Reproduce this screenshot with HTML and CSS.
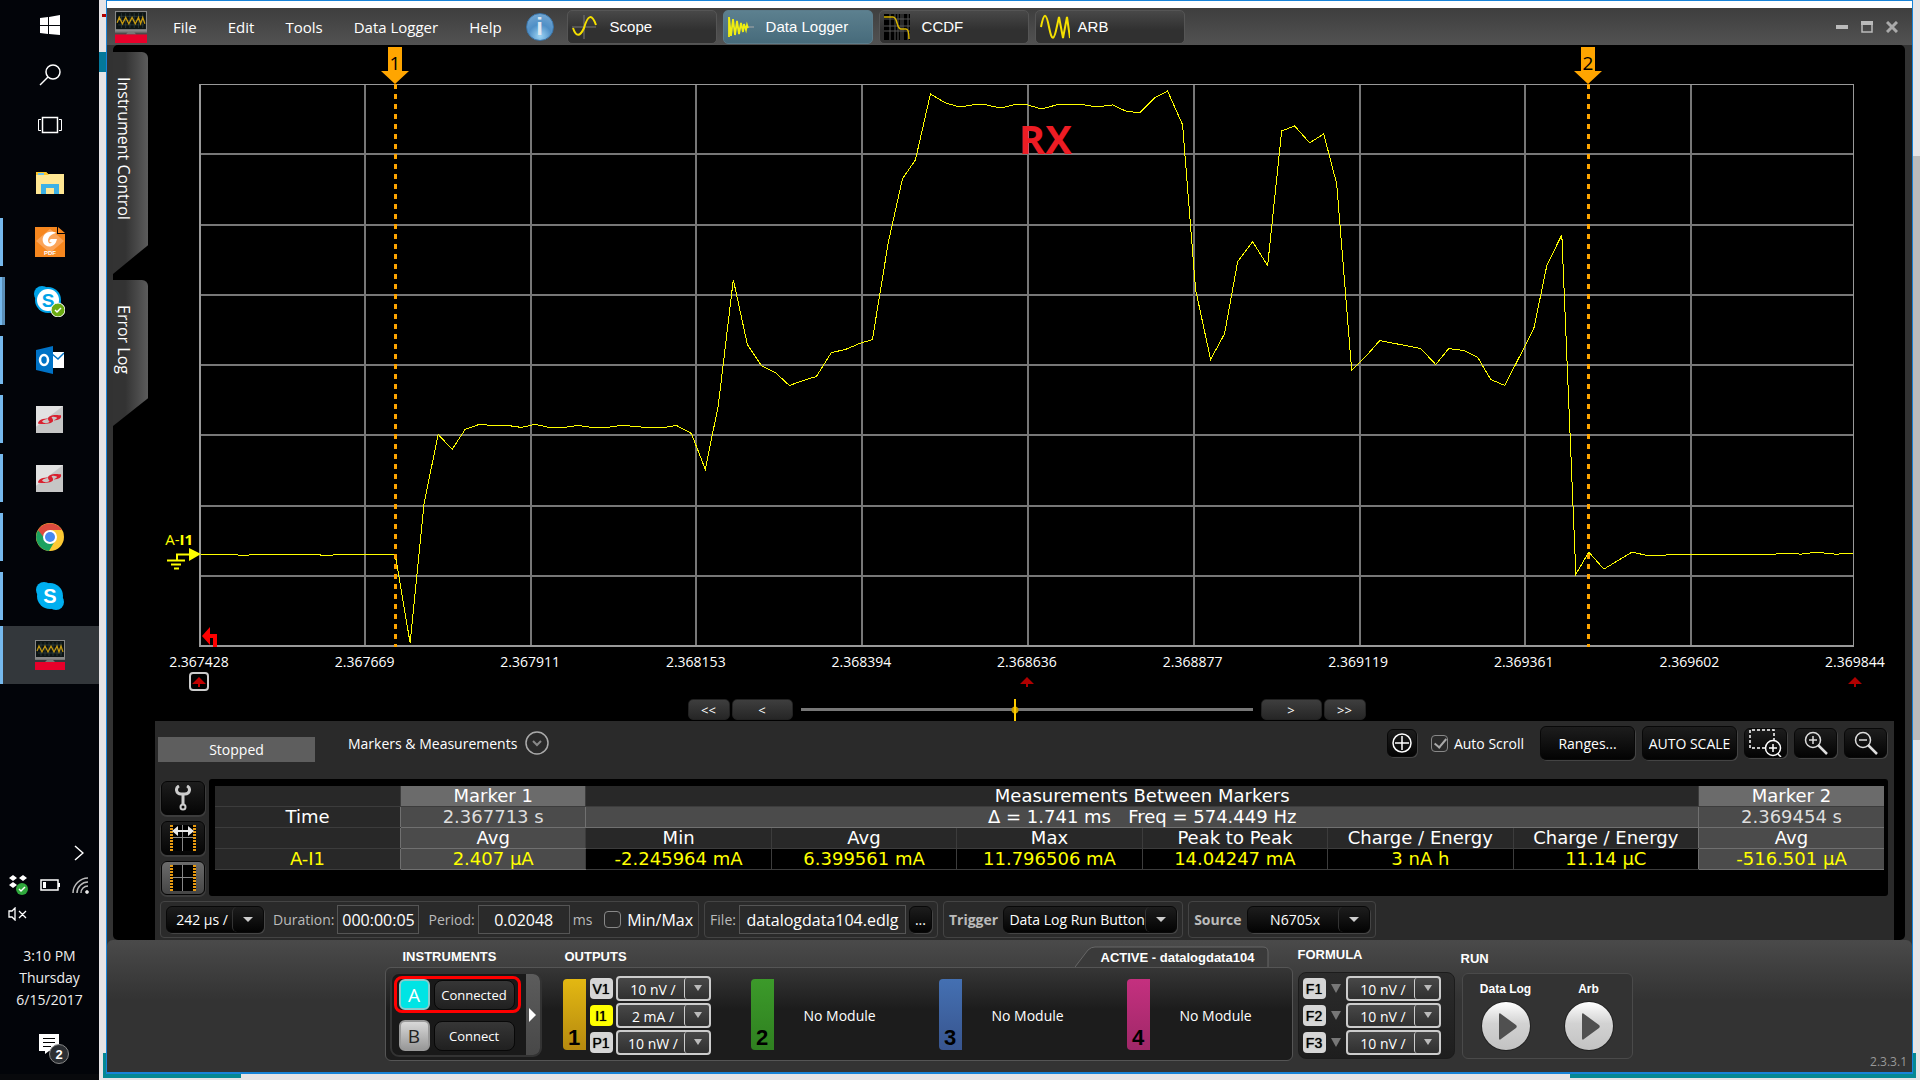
FILE: index.html
```html
<!-- Power analyzer data logger screen -->
<!DOCTYPE html>
<html lang="en">
  <head>
    <meta charset="utf-8">
    <title>Data Logger</title>
    <link rel="stylesheet" href="styles.css">
  </head>

  <body>
    <!-- Shared icons -->
    <svg class="symbols">
      <symbol id="analyzer" viewBox="0 0 30 30">
        <rect width="30" height="20" fill="#888"/>
        <rect x="1" y="1" width="28" height="16" fill="#0d1414"/>
        <path d="M3 5h24M3 9h24M3 13h24M6 2v14M10 2v14M14 2v14M18 2v14M22 2v14M26 2v14" stroke="#3d5050" stroke-width="0.500" fill="none"/>
        <path d="M2 11l2-5 3 6 3-6 3 6 3-6 3 6 3-6 2 6 2-6 2 6" stroke="#c79a10" stroke-width="1.200" fill="none"/>
        <path d="M0 19h30v1H0zM12 20h6l2 2H10z" fill="#777"/>
        <rect y="22" width="30" height="8" fill="#e8002a"/>
      </symbol>
      <symbol id="silabs" viewBox="0 0 26 26">
        <rect width="26" height="26" fill="#c6c6c6"/>
        <path d="M0 0h26L0 20z" fill="#e2e2e2"/>
        <path d="M2 17c0-4 5-5 10-5-3 1-6 2-6 3 1 2 6 2 7 0-2-2-2-4 0-5 4-2 9-1 11-1 1 3-2 5-7 5 1-1 4-2 3-3-2-1-5-1-5 0 2 2 2 4 0 5-4 2-9 1-13 1z" fill="#d9202f"/>
      </symbol>
      <symbol id="markers" viewBox="0 0 26 26">
        <path d="M0 0h26v26H0z" fill="#000"/>
        <path d="M12.500 0v26M2 12.500h22" stroke="#888"/>
        <path d="M1.500 0v26M24.500 0v26" stroke="#e89a10" stroke-width="3" stroke-dasharray="2 1"/>
      </symbol>
      <symbol id="play" viewBox="0 0 50 50">
        <circle cx="25" cy="25" r="25" fill="#222"/>
        <circle cx="25" cy="25" r="24" fill="url(#knob)"/>
        <path d="M18 14c0-2 1-2 2-1l15 11c1 1 1 2 0 3L20 38c-1 1-2 1-2-1z" fill="#505050"/>
      </symbol>
      <linearGradient id="knob" x1="0" y1="0" x2="0" y2="1">
        <stop offset="0" stop-color="#fff"/>
        <stop offset="0.450" stop-color="#d2d2d2"/>
        <stop offset="1" stop-color="#c2c2c2"/>
      </linearGradient>
    </svg>

    <!-- Windows taskbar -->
    <nav class="taskbar">
      <button class="task small" aria-label="Start">
        <svg width="20" height="20" viewBox="0 0 20 20" fill="#fff"><path d="M0 3l8-1v8H0zM9 2l11-2v10H9zM0 11h8v8l-8-1zM9 11h11v9L9 19z"/></svg>
      </button>
      <button class="task small" aria-label="Search">
        <svg width="22" height="22" viewBox="0 0 22 22" fill="none" stroke="#fff" stroke-width="1.500"><circle cx="14" cy="8" r="7"/><path d="M9 13l-8 8"/></svg>
      </button>
      <button class="task small" aria-label="Task view">
        <svg width="24" height="18" viewBox="0 0 24 18" fill="none" stroke="#fff"><path d="M4.500 1.500h15v15h-15z" stroke-width="1.500"/><path d="M3 3.500H.5v11H3M21 3.500h2.500v11H21"/></svg>
      </button>
      <button class="task" aria-label="File Explorer">
        <svg width="28" height="24" viewBox="0 0 28 24"><path d="M0 1h10l2 2h16v20H0z" fill="#ffe793"/><path d="M0 1h10l3 3H0z" fill="#ffc726"/><path d="M2 2h6v2H2z" fill="#6ec4ee"/><path d="M5 13h18v10h-5v-6h-8v6H5z" fill="#3cb1e6"/></svg>
      </button>
      <button class="task open" aria-label="PDF reader">
        <svg width="30" height="30" viewBox="0 0 30 30"><path d="M0 0h22v7h8v23H0z" fill="#f6871f"/><path d="M23 0l7 6h-7z" fill="#f6871f"/><path d="M15 2l14 12-14 12L1 14z" fill="#fba55a"/><path d="M22 6C13 2 6 8 8 15c2 6 12 7 14-3h-6c-3 2-1 4 1 3-3 4-6-2-2-6 2-2 5-3 7-3z" fill="#fff"/><text x="15" y="28" font-size="6" class="pdf-text">PDF</text></svg>
      </button>
      <button class="task open grouped" aria-label="Skype for Business">
        <svg width="31" height="31" viewBox="0 0 31 31"><circle cx="8" cy="8" r="8" fill="#00a3e8"/><circle cx="19" cy="19" r="8" fill="#00a3e8"/><circle cx="14" cy="14" r="13" fill="#00a3e8"/><circle cx="14" cy="14" r="11" fill="#fff"/><text x="14" y="21" font-size="19" class="skype-blue">S</text><circle cx="24" cy="24" r="7" fill="#6bab12" stroke="#fff"/><path d="M21 24l2 2 4-4" fill="none" stroke="#fff" stroke-width="1.500"/></svg>
      </button>
      <button class="task open" aria-label="Outlook">
        <svg width="28" height="28" viewBox="0 0 28 28"><path d="M16 6h12v16H16z" fill="#fff"/><path d="M16 8l6 5 6-6" fill="none" stroke="#0072c6" stroke-width="1.500"/><path d="M0 4l17-4v28L0 24z" fill="#0072c6"/><ellipse cx="8" cy="14" rx="4" ry="5" fill="none" stroke="#fff" stroke-width="2.500"/></svg>
      </button>
      <button class="task open" aria-label="Simplicity Studio"><svg width="27" height="27"><use href="#silabs"/></svg></button>
      <button class="task open" aria-label="Simplicity Commander"><svg width="27" height="27"><use href="#silabs"/></svg></button>
      <button class="task open" aria-label="Chrome">
        <svg width="28" height="28" viewBox="0 0 28 28"><circle cx="14" cy="14" r="14" fill="#fcc934"/><path d="M14 14L2 7a14 14 0 0 0 11 21l7-12z" fill="#1aa15f"/><path d="M2 7a14 14 0 0 1 24 0H14l-5 9z" fill="#dd4b3e"/><circle cx="14" cy="14" r="7" fill="#fff"/><circle cx="14" cy="14" r="5" fill="#4688f1"/></svg>
      </button>
      <button class="task open" aria-label="Skype">
        <svg width="28" height="28" viewBox="0 0 28 28"><circle cx="8" cy="8" r="8" fill="#00aff0"/><circle cx="20" cy="20" r="8" fill="#00aff0"/><circle cx="14" cy="14" r="13" fill="#00aff0"/><text x="14" y="21" font-size="20" class="skype-white">S</text></svg>
      </button>
      <button class="task open active" aria-label="Power analyzer"><svg width="30" height="30"><use href="#analyzer"/></svg></button>

      <!-- System tray and clock -->
      <div class="tray">
        <svg class="tray-more" width="10" height="16" viewBox="0 0 10 16" fill="none" stroke="#fff" stroke-width="1.500"><path d="M1 1l8 7-8 7"/></svg>
        <div class="tray-icons">
          <svg width="20" height="20" viewBox="0 0 20 20"><path d="M5 0l4 3-4 3-4-3zM15 0l4 3-4 3-4-3zM5 7l4 3-4 3-4-3zM9 14l4 3v2z" fill="#fff"/><circle cx="14" cy="14" r="6" fill="#2fa83c"/><path d="M11 14l2 2 4-4" fill="none" stroke="#fff" stroke-width="1.500"/></svg>
          <svg width="20" height="12" viewBox="0 0 20 12"><path d="M1 1h17v10H1z" fill="none" stroke="#fff" stroke-width="1.500"/><path d="M3 3h3v6H3zM18 4h2v4h-2z" fill="#fff"/></svg>
          <svg width="17" height="17" viewBox="0 0 17 17" fill="none" stroke="#bbb"><path d="M1 16C1 8 8 1 16 1M5 16C5 10 10 5 16 5M9 16c0-4 3-7 7-7" stroke-width="1.500"/><circle cx="15" cy="15" r="1.500" fill="#fff"/></svg>
        </div>
        <svg width="20" height="14" viewBox="0 0 20 14" fill="none" stroke="#fff"><path d="M1 4h3l3-3v12l-3-3H1zM11 4l7 7M18 4l-7 7" stroke-width="1.300"/></svg>
      </div>
      <p class="clock">3:10 PM<br>Thursday<br>6/15/2017</p>
      <button class="notices" aria-label="Notifications">
        <svg width="30" height="30" viewBox="0 0 30 30"><path d="M0 0h20v17H10l-4 3v-3H0z" fill="#fff"/><path d="M4 4.500h12M4 8.500h12M4 12.500h8" stroke="#000"/><circle cx="20" cy="20" r="9.500" fill="#2c2f33" stroke="#888"/><text x="20" y="25" font-size="13" class="badge">2</text></svg>
      </button>
    </nav>

    <!-- Application window -->
    <div class="app">
      <header class="titlebar">
        <svg class="logo" width="32" height="32"><use href="#analyzer"/></svg>
        <nav class="menu">
          <button>File</button>
          <button>Edit</button>
          <button>Tools</button>
          <button>Data Logger</button>
          <button>Help</button>
        </nav>
        <button class="info" aria-label="About">i</button>
        <div class="modes">
          <button class="mode">
            <svg width="26" height="24" viewBox="0 0 26 24" fill="none"><path d="M0 12h24M12 0v24" stroke="#777"/><path d="M1 13c3 9 7 9 11 0 4-14 8-14 12-3" stroke="#f5e000" stroke-width="2"/></svg>
            Scope
          </button>
          <button class="mode selected">
            <svg width="26" height="22" viewBox="0 0 26 22" fill="none"><path d="M20 11h6" stroke="#aaa"/><path d="M1 21V1l2 19L5 3l2 16L9 5l2 13 2-11 2 9 1-8 2 6 1-5 1 3" stroke="#f0ee10" stroke-width="1.800"/></svg>
            Data Logger
          </button>
          <button class="mode">
            <svg width="26" height="26" viewBox="0 0 26 26" fill="none"><path d="M0 0h26v26H0z" fill="#000"/><path d="M0 5h26M0 12h26M0 17h26M6 0v26M11 0v26M14 0v26M17 0v26M19 0v26M24 0v26" stroke="#555"/><path d="M0 3h9c5 0 3 12 8 12h5q3 0 3 10" stroke="#d8b400" stroke-width="1.500"/></svg>
            CCDF
          </button>
          <button class="mode">
            <svg width="30" height="26" viewBox="0 0 30 26" fill="none"><path d="M1 13C4-2 6-2 9 13s5 14 8-1l2-9 4 21 4-21 3 21" stroke="#f5e000" stroke-width="2"/></svg>
            ARB
          </button>
        </div>
        <div class="window-buttons">
          <button aria-label="Minimize"><svg width="12" height="12"><path d="M0 4h12v4H0z" fill="#bbb"/></svg></button>
          <button aria-label="Maximize"><svg width="12" height="12"><path d="M1 1h10v10H1z" fill="none" stroke="#bbb" stroke-width="1.500"/><path d="M0 0h12v4H0z" fill="#bbb"/></svg></button>
          <button aria-label="Close"><svg width="12" height="12"><path d="M1 1l10 10M11 1L1 11" stroke="#aaa" stroke-width="3"/></svg></button>
        </div>
      </header>

      <main class="screen">
        <div class="plot-row">
          <div class="side-tabs">
            <button class="side-tab tall">Instrument Control</button>
            <button class="side-tab">Error Log</button>
          </div>

          <section class="plot-area">
            <div class="plot">
              <!-- Grid and trace -->
              <svg class="trace" viewBox="201 85 1651 561" preserveAspectRatio="none">
                <path class="grid" d="M200 154h1653M200 225h1653M200 295h1653M200 366h1653M200 436h1653M200 507h1653M200 577h1653M365 84v564M531 84v564M696 84v564M862 84v564M1027 84v564M1193 84v564M1359 84v564M1524 84v564M1690 84v564"/>
                <polyline class="wave" points="200,555 228,555 240,556 248,556 255,555 312,555 322,556 332,556 340,555 395,555 410,644 424,504 438,435 452,450 465,430 479,425 492,426 507,426 521,428 535,425 549,428 564,428 578,426 591,428 607,428 621,426 635,427 645,428 664,428 676,426 691,434 705,470 718,406 733,280 747,345 761,366 775,373 789,386 803,381 816,377 831,353 845,350 859,344 872,340 888,242 902,179 915,160 930,94 945,103 959,107 972,105 986,105 1000,108 1013,105 1027,105 1041,109 1056,105 1084,105 1096,107 1112,105 1125,111 1139,113 1154,98 1167,91 1182,125 1195,290 1210,360 1224,334 1237,262 1252,242 1267,266 1281,131 1294,126 1309,143 1323,134 1336,184 1351,371 1365,357 1379,341 1420,349 1435,365 1448,349 1463,351 1477,358 1490,380 1504,386 1533,329 1546,266 1561,235 1575,575 1588,553 1603,570 1631,553 1645,556 1664,556 1674,555 1773,555 1785,554 1800,555 1815,553 1835,555 1853,554"/>
              </svg>
              <div class="marker marker-1">
                <svg width="28" height="37" viewBox="0 0 28 37"><path d="M7 0h14v24h7L14 37 0 24h7z" fill="#ffa500"/></svg>
                <span>1</span>
              </div>
              <div class="marker marker-2">
                <svg width="28" height="37" viewBox="0 0 28 37"><path d="M7 0h14v24h7L14 37 0 24h7z" fill="#ffa500"/></svg>
                <span>2</span>
              </div>
              <div class="channel">
                <span>A-<b>I1</b></span>
                <svg width="34" height="22" viewBox="0 0 34 22"><path d="M22 0l12 6-12 7z" fill="#ff0"/><path d="M24 6.500H10V12M0 12.500h18M4 16.500h10M7 20.500h5" fill="none" stroke="#ff0" stroke-width="2"/></svg>
              </div>
              <svg class="trigger" width="15" height="20" viewBox="0 0 15 20"><path d="M8 0v7h7v13h-4v-9H8v7L0 9z" fill="#f00"/></svg>
              <span class="note">RX</span>
            </div>

            <div class="axis">
              <span>2.367428</span>
              <span>2.367669</span>
              <span>2.367911</span>
              <span>2.368153</span>
              <span>2.368394</span>
              <span>2.368636</span>
              <span>2.368877</span>
              <span>2.369119</span>
              <span>2.369361</span>
              <span>2.369602</span>
              <span>2.369844</span>
            </div>
            <div class="anchors">
              <button class="anchor boxed" aria-label="Anchor left"><svg width="14" height="10"><path d="M7 0l7 7H8v3H6V7H0z" fill="#c00000"/></svg></button>
              <button class="anchor" aria-label="Anchor center"><svg width="14" height="10"><path d="M7 0l7 7H8v3H6V7H0z" fill="#b00000"/></svg></button>
              <button class="anchor" aria-label="Anchor right"><svg width="14" height="10"><path d="M7 0l7 7H8v3H6V7H0z" fill="#b00000"/></svg></button>
            </div>

            <div class="pager">
              <button class="page-btn">&lt;&lt;</button>
              <button class="page-btn wide">&lt;</button>
              <input type="range" class="scroll" min="0" max="1000" value="475" aria-label="Scroll position">
              <button class="page-btn wide">&gt;</button>
              <button class="page-btn">&gt;&gt;</button>
            </div>
          </section>
        </div>

        <!-- Measurement panel -->
        <section class="panel">
          <div class="panel-head">
            <div class="status">Stopped</div>
            <button class="view-menu">Markers &amp; Measurements
              <svg width="24" height="24" viewBox="0 0 24 24" fill="none"><circle cx="12" cy="12" r="11" stroke="#aaa" stroke-width="1.500"/><path d="M8 10l4 4 4-4" stroke="#888" stroke-width="2"/></svg>
            </button>
            <div class="tools">
              <button class="dark-btn center-btn" aria-label="Center"><svg width="20" height="20" viewBox="0 0 20 20" fill="none" stroke="#fff" stroke-width="1.500"><circle cx="10" cy="10" r="9"/><path d="M10 3v14M3 10h14"/></svg></button>
              <label class="check auto-scroll"><input type="checkbox" checked>Auto Scroll</label>
              <button class="dark-btn text-btn">Ranges...</button>
              <button class="dark-btn text-btn">AUTO SCALE</button>
              <button class="dark-btn zoom-btn" aria-label="Zoom to area"><svg width="34" height="28" viewBox="0 0 34 28" fill="none" stroke="#fff"><path d="M16 19H1V1h24v10" stroke-width="1.500" stroke-dasharray="3 2"/><circle cx="24" cy="19" r="7.500" stroke-width="1.500"/><path d="M24 15v8M20 19h8M29 25l3 3" stroke-width="1.500"/></svg></button>
              <button class="dark-btn zoom-btn" aria-label="Zoom in"><svg width="24" height="24" viewBox="0 0 24 24" fill="none" stroke="#ddd"><circle cx="9" cy="9" r="7.500" stroke-width="1.500"/><path d="M9 5v8M5 9h8" stroke-width="1.500"/><path d="M14 14l9 9" stroke-width="2.500"/></svg></button>
              <button class="dark-btn zoom-btn" aria-label="Zoom out"><svg width="24" height="24" viewBox="0 0 24 24" fill="none" stroke="#ddd"><circle cx="9" cy="9" r="7.500" stroke-width="1.500"/><path d="M5 9h8" stroke-width="1.500"/><path d="M14 14l9 9" stroke-width="2.500"/></svg></button>
            </div>
          </div>

          <div class="panel-body">
            <div class="panel-views">
              <button class="view-btn" aria-label="Properties"><svg width="16" height="26" viewBox="0 0 16 26" fill="none" stroke="#ccc"><path d="M4 1C0 3 1 9 6 9h4c5 0 6-6 2-8" stroke-width="3"/><path d="M8 9v10" stroke-width="3"/><circle cx="8" cy="22" r="2.500" stroke-width="2"/></svg></button>
              <button class="view-btn" aria-label="Move markers"><svg width="26" height="26" viewBox="0 0 26 26"><use href="#markers"/><path d="M2 6l6-5v4h10V1l6 5-6 5V7H8v4z" fill="#e8e8e8"/></svg></button>
              <button class="view-btn selected" aria-label="Show markers"><svg width="26" height="26"><use href="#markers"/></svg></button>
            </div>
            <div class="table-box">
              <table class="measures">
                <tr>
                  <th></th>
                  <th class="head-cell">Marker 1</th>
                  <th colspan="6">Measurements Between Markers</th>
                  <th class="head-cell">Marker 2</th>
                </tr>
                <tr>
                  <th>Time</th>
                  <td class="marker-cell">2.367713 s</td>
                  <td colspan="6" class="marker-cell delta">Δ = 1.741 ms &nbsp; Freq = 574.449 Hz</td>
                  <td class="marker-cell">2.369454 s</td>
                </tr>
                <tr>
                  <th></th>
                  <th class="marker-cell delta">Avg</th>
                  <th>Min</th>
                  <th>Avg</th>
                  <th>Max</th>
                  <th>Peak to Peak</th>
                  <th>Charge / Energy</th>
                  <th>Charge / Energy</th>
                  <th class="marker-cell delta">Avg</th>
                </tr>
                <tr class="values">
                  <th>A-I1</th>
                  <td class="marker-cell">2.407 µA</td>
                  <td>-2.245964 mA</td>
                  <td>6.399561 mA</td>
                  <td>11.796506 mA</td>
                  <td>14.04247 mA</td>
                  <td>3 nA h</td>
                  <td>11.14 µC</td>
                  <td class="marker-cell">-516.501 µA</td>
                </tr>
              </table>
            </div>
          </div>

          <!-- Logger settings -->
          <form class="settings">
            <div class="group">
              <span class="drop time-drop"><select aria-label="Time per division"><option>242 µs /</option></select></span>
              <label for="duration">Duration:</label>
              <input type="text" id="duration" class="field duration" value="000:00:05">
              <label for="period">Period:</label>
              <input type="text" id="period" class="field period" value="0.02048">
              <span class="unit">ms</span>
              <label class="check minmax"><input type="checkbox">Min/Max</label>
            </div>
            <div class="group">
              <label for="file">File:</label>
              <input type="text" id="file" class="field file" value="datalogdata104.edlg">
              <button type="button" class="dark-btn browse">...</button>
            </div>
            <div class="group">
              <label for="trigger" class="strong">Trigger</label>
              <span class="drop trigger-drop"><select id="trigger"><option>Data Log Run Button</option></select></span>
            </div>
            <div class="group">
              <label for="source" class="strong">Source</label>
              <span class="drop source-drop"><select id="source"><option>N6705x</option></select></span>
            </div>
          </form>
        </section>
      </main>

      <!-- Instrument, output and run controls -->
      <footer class="controls">
        <section class="outputs-section">
          <div class="section-heads">
            <h2 class="instruments-title">INSTRUMENTS</h2>
            <h2>OUTPUTS</h2>
            <div class="active-tab">
              <svg viewBox="0 0 194 21" width="194" height="21"><path d="M0 21L13 4q3-3 7-3h168q5 0 5 5v15" fill="#3a3a3a" stroke="#666"/></svg>
              <span>ACTIVE - datalogdata104</span>
            </div>
          </div>
          <div class="outputs-box">
            <div class="instruments">
              <div class="instrument-list">
                <div class="instrument connected"><button class="letter">A</button><button class="connect">Connected</button></div>
                <div class="instrument"><button class="letter">B</button><button class="connect">Connect</button></div>
              </div>
              <button class="expand" aria-label="Expand"><svg width="7" height="14"><path d="M0 0l7 7-7 7z" fill="#fff"/></svg></button>
            </div>
            <div class="output">
              <div class="output-bar yellow">1</div>
              <div class="ranges">
                <div class="range-row"><button class="tag">V1</button><span class="drop light"><select aria-label="V1 range"><option>10 nV /</option></select></span></div>
                <div class="range-row"><button class="tag on">I1</button><span class="drop light"><select aria-label="I1 range"><option>2 mA /</option></select></span></div>
                <div class="range-row"><button class="tag">P1</button><span class="drop light"><select aria-label="P1 range"><option>10 nW /</option></select></span></div>
              </div>
            </div>
            <div class="output"><div class="output-bar green">2</div><p class="module">No Module</p></div>
            <div class="output"><div class="output-bar blue">3</div><p class="module">No Module</p></div>
            <div class="output"><div class="output-bar pink">4</div><p class="module">No Module</p></div>
          </div>
        </section>

        <section>
          <h2 class="formula-title">FORMULA</h2>
          <div class="formula-box">
            <div class="range-row"><button class="tag">F1</button><i class="down"></i><span class="drop light"><select aria-label="F1 range"><option>10 nV /</option></select></span></div>
            <div class="range-row"><button class="tag">F2</button><i class="down"></i><span class="drop light"><select aria-label="F2 range"><option>10 nV /</option></select></span></div>
            <div class="range-row"><button class="tag">F3</button><i class="down"></i><span class="drop light"><select aria-label="F3 range"><option>10 nV /</option></select></span></div>
          </div>
        </section>

        <section>
          <h2 class="run-title">RUN</h2>
          <div class="run-box">
            <button class="run"><span>Data Log</span><svg width="50" height="50"><use href="#play"/></svg></button>
            <button class="run"><span>Arb</span><svg width="50" height="50"><use href="#play"/></svg></button>
          </div>
        </section>
        <span class="version">2.3.3.1</span>
      </footer>
    </div>
  </body>
</html>
```

FILE: styles.css
```css
/* CSS styles for the data logger screen */
*{
  box-sizing: border-box;
}

body{
  /* Desktop that shows around the window */
  margin: 0;
  height: 100vh;
  display: flex;
  overflow: hidden;
  font-family: "Open Sans", "Noto Sans", sans-serif;
  font-size: 14px;
  color: white;
  background:
    linear-gradient(#04789a, #04789a) 99px 52px / 8px 20px no-repeat,
    linear-gradient(#b00000, #b00000) 102px 14px / 4px 3px no-repeat,
    linear-gradient(#e6e4e6, #e6e4e6) 0 100% / 100% 2px no-repeat,
    linear-gradient(#058793, #058793) 103px 100% / 138px 27px no-repeat,
    linear-gradient(#058793, #058793) calc(100% - 4px) 100% / 346px 27px no-repeat,
    linear-gradient(#bbb, #bbb) 100% 156px / 7px 584px no-repeat,
    #e6e4e6;
}

button{
  font: inherit;
  color: inherit;
  background: none;
  border: 0;
  padding: 0;
}

h2{
  margin: 0;
  font-family: "Liberation Sans", Arial, sans-serif;
  font-size: 13px;
  line-height: 16px;
  font-weight: bold;
}

svg{
  display: block;
  flex: none;
}

.symbols{
  position: absolute;
  width: 0;
  height: 0;
}

/* Taskbar */
.taskbar{
  width: 99px;
  flex: none;
  display: flex;
  flex-direction: column;
  background-color: #020409;
  border-bottom: 6px solid #08090c;
}

.task{
  height: 58px;
  margin-bottom: 1px;
  display: flex;
  align-items: center;
  justify-content: center;
  position: relative;
  flex: none;
}

.task.small{
  height: 49px;
}

.task.small:nth-child(3){
  margin-bottom: 5px;
}

.open::before{
  /* Running program stripe */
  content: "";
  position: absolute;
  left: 0;
  top: 5px;
  bottom: 5px;
  width: 3px;
  background-color: #76b9ed;
}

.grouped::before{
  width: 5px;
  background: linear-gradient(90deg, #76b9ed 2px, #5b8fb8 2px);
}

.active{
  background-color: #33373b;
}

.active::before{
  top: 0;
  bottom: 0;
}

.pdf-text, .skype-blue, .skype-white, .badge{
  font-family: "Liberation Sans", Arial, sans-serif;
  font-weight: bold;
  fill: white;
  text-anchor: middle;
}

.skype-blue{
  fill: #00a3e8;
}

.tray{
  margin-top: auto;
  padding-left: 8px;
}

.tray-more{
  margin: 0 0 14px 66px;
}

.tray-icons{
  display: flex;
  align-items: center;
  gap: 12px;
  margin-bottom: 12px;
}

.clock{
  margin: 24px 0 23px;
  font-size: 14px;
  line-height: 22px;
  text-align: center;
  color: #eee;
}

.notices{
  margin: 0 0 10px 39px;
}

/* Window */
.app{
  flex: 1;
  min-width: 0;
  margin: 0 7px 6px;
  display: flex;
  flex-direction: column;
  background-color: #323232;
  border: 1px solid #1883d7;
  border-width: 1px 1px 2px;
}

.titlebar{
  height: 44px;
  flex: none;
  display: flex;
  align-items: center;
  padding: 0 14px 0 8px;
  border-top: 7px solid white;
  background: linear-gradient(#3e3e3e, #525252);
}

.menu{
  display: flex;
  gap: 31px;
  margin-left: 26px;
  font-size: 15px;
}

.info{
  width: 28px;
  height: 28px;
  margin: 0 13px 0 24px;
  border-radius: 50%;
  background: radial-gradient(circle at 50% 85%, #9cd4f4, #4f8fc6 45%, #7eaed6);
  border: 1px solid #3a76ab;
  font: bold 24px/24px "Liberation Sans", Arial, sans-serif;
  color: #dce8f2;
}

.modes{
  display: flex;
  gap: 6px;
  font-family: "Liberation Sans", Arial, sans-serif;
  font-size: 15px;
  text-shadow: 0 0 1px white;
}

.mode{
  width: 150px;
  height: 34px;
  display: grid;
  grid-template-columns: 32px auto;
  justify-content: start;
  align-items: center;
  gap: 6px;
  padding-left: 4px;
  text-align: left;
  border: 1px solid #555;
  border-radius: 5px;
  background: linear-gradient(#484848, #303030 60%);
}

.mode.selected{
  border-color: #5b7c8b;
  background: linear-gradient(#5c808f, #476b7b);
}

.window-buttons{
  display: flex;
  gap: 13px;
  margin-left: auto;
}

/* Black screen with the plot */
.screen{
  flex: 1;
  margin: 0 7px 0 6px;
  display: flex;
  flex-direction: column;
  background-color: black;
  border-radius: 5px;
}

.plot-row{
  flex: 1;
  display: flex;
}

.side-tabs{
  width: 35px;
  flex: none;
  padding-top: 7px;
}

.side-tab{
  display: block;
  width: 35px;
  height: 146px;
  margin-bottom: 6px;
  padding: 25px 14px 0 0;
  writing-mode: vertical-rl;
  text-align: left;
  font-size: 16px;
  line-height: 21px;
  background: linear-gradient(90deg, #333 35%, #5c5c5c);
  border-radius: 0 6px 0 0;
  clip-path: polygon(0 0, 100% 0, 100% 81%, 0 100%);
}

.side-tab.tall{
  height: 222px;
  clip-path: polygon(0 0, 100% 0, 100% 87%, 0 100%);
}

.plot-area{
  flex: 1;
  display: flex;
  flex-direction: column;
  padding: 39px 51px 1px;
}

.plot{
  flex: 1;
  position: relative;
  border: 1px solid #999;
  border-width: 1px 1px 2px 2px;
}

.trace{
  position: absolute;
  width: 100%;
  height: 100%;
}

.trace path, .trace polyline{
  fill: none;
  vector-effect: non-scaling-stroke;
  shape-rendering: crispEdges;
}

.grid{
  stroke: #777;
  stroke-width: 2px;
}

.wave{
  stroke: yellow;
  stroke-width: 1px;
}

.marker{
  /* Arrow above the plot, dashed line down through it */
  position: absolute;
  top: -38px;
  bottom: -2px;
  width: 28px;
  margin-left: -14px;
  font-size: 19px;
  line-height: 32px;
  text-align: center;
  color: black;
}

.marker svg{
  position: absolute;
}

.marker span{
  position: relative;
}

.marker::after{
  content: "";
  position: absolute;
  left: 13px;
  top: 37px;
  bottom: 0;
  width: 3px;
  background: repeating-linear-gradient(orange 0 5px, transparent 5px 10px);
}

.marker-1{
  left: 11.74%;
}

.marker-2{
  left: 83.96%;
}

.channel{
  position: absolute;
  right: 100%;
  top: 79.5%;
  display: flex;
  flex-direction: column;
  align-items: flex-end;
  font-size: 15px;
  line-height: 18px;
  white-space: nowrap;
  color: yellow;
}

.channel span{
  padding-right: 8px;
}

.trigger{
  position: absolute;
  left: 1px;
  bottom: -2px;
}

.note{
  position: absolute;
  left: 49.5%;
  top: 5%;
  font-size: 40px;
  line-height: 52px;
  font-weight: bold;
  color: #ed1c24;
}

.axis{
  display: flex;
  justify-content: space-between;
  margin: 5px -33px 0 -32px;
  line-height: 20px;
}

.axis span{
  width: 64px;
  text-align: center;
}

.anchors{
  display: flex;
  justify-content: space-between;
  margin: 0 -11px 8px -10px;
}

.anchor{
  width: 20px;
  height: 19px;
  display: flex;
  align-items: center;
  justify-content: center;
}

.boxed{
  border: 2px solid #ccc;
  border-radius: 4px;
}

.pager{
  display: flex;
  justify-content: center;
  align-items: center;
  gap: 2px;
  font-size: 13px;
}

.page-btn{
  width: 42px;
  height: 21px;
  line-height: 18px;
  border-radius: 5px;
  border: 1px solid #222;
  background: linear-gradient(#3e3e3e, #262626);
}

.page-btn.wide{
  width: 61px;
}

.scroll{
  appearance: none;
  width: 452px;
  height: 21px;
  margin: 0 6px;
  background: linear-gradient(#777, #777) center / 100% 3px no-repeat;
}

.scroll::-webkit-slider-thumb{
  appearance: none;
  width: 8px;
  height: 22px;
  background:
    linear-gradient(#fc0, #fc0) center / 2px 100% no-repeat,
    radial-gradient(circle, #c9a000 3px, transparent 4px);
}

/* Measurement panel */
.panel{
  margin: 0 11px 0 42px;
  padding: 0 5px 2px;
  background-color: #2a2a2a;
}

.panel-head{
  display: flex;
  align-items: center;
  height: 44px;
  margin: 0 2px 14px -2px;
}

.status{
  width: 157px;
  height: 25px;
  margin-top: 13px;
  line-height: 25px;
  text-align: center;
  background-color: #5e5e5e;
}

.view-menu{
  display: flex;
  align-items: center;
  gap: 8px;
  margin-left: 33px;
}

.tools{
  display: flex;
  align-items: center;
  gap: 7px;
  margin-left: auto;
}

.dark-btn{
  display: flex;
  align-items: center;
  justify-content: center;
  border: 1px solid #080808;
  border-radius: 6px;
  background: linear-gradient(#1d1d1d, #030303);
  box-shadow: 1px 1px 0 #444;
}

.center-btn{
  width: 30px;
  height: 28px;
}

.text-btn{
  width: 95px;
  height: 34px;
  white-space: nowrap;
}

.zoom-btn{
  width: 43px;
  height: 30px;
}

.check{
  display: flex;
  align-items: center;
  gap: 6px;
}

.check input{
  appearance: none;
  width: 17px;
  height: 17px;
  margin: 0;
  border: 1px solid #888;
  border-radius: 4px;
  position: relative;
}

.check input:checked::after{
  content: "";
  position: absolute;
  left: 5px;
  top: 0;
  width: 5px;
  height: 10px;
  border: solid #aaa;
  border-width: 0 2px 2px 0;
  transform: rotate(40deg);
}

.auto-scroll{
  margin: 0 9px 0 7px;
}

.panel-body{
  display: flex;
  gap: 4px;
  margin-right: 1px;
}

.panel-views{
  display: flex;
  flex-direction: column;
  gap: 6px;
  padding: 2px 0 0 1px;
}

.view-btn{
  width: 44px;
  height: 34px;
  display: flex;
  align-items: center;
  justify-content: center;
  border: 1px solid #050505;
  border-radius: 6px;
  background: linear-gradient(#1d1d1d, #050505);
  box-shadow: 0 1px 0 1px #3c3c3c;
}

.view-btn.selected{
  background: linear-gradient(#6c6c6c, #454545);
}

.table-box{
  flex: 1;
  padding: 7px 4px 26px 6px;
  background-color: black;
  border-radius: 3px;
}

.measures{
  width: 100%;
  table-layout: fixed;
  border-collapse: collapse;
  font-family: "DejaVu Sans", Verdana, sans-serif;
  font-size: 18px;
  line-height: 20px;
}

.measures th, .measures td{
  padding: 0;
  border: 1px solid #3c3c3c;
  border-width: 0 0 1px 1px;
  font-weight: normal;
  text-align: center;
  white-space: nowrap;
}

.measures th{
  background-color: #282828;
}

.measures th:first-child{
  border-left: 0;
}

.measures .head-cell{
  background-color: #6b6b6b;
}

.measures .marker-cell{
  background-color: #4b4b4b;
  border-color: #707070;
  color: #ddd;
}

.measures .delta{
  color: white;
}

.measures .values th, .measures .values td{
  color: yellow;
}

/* Settings row */
.settings{
  display: flex;
  gap: 5px;
  margin-top: 5px;
}

.group{
  display: flex;
  align-items: center;
  gap: 3px;
  height: 37px;
  padding: 0 5px;
  border: 1px solid #444;
  border-radius: 4px;
  color: #bbb;
}

.field{
  height: 29px;
  padding: 0 3px;
  background-color: #2a2a2a;
  border: 1px solid #555;
  color: white;
  font: 16px "Open Sans", "Noto Sans", sans-serif;
  text-align: center;
}

.duration{
  width: 82px;
  margin-right: 6px;
}

.period{
  width: 92px;
}

.file{
  width: 167px;
}

.browse{
  width: 23px;
  height: 27px;
  color: white;
}

.minmax{
  margin-left: 9px;
  color: white;
  font-size: 16px;
}

.strong{
  font-weight: bold;
  margin-right: 2px;
}

.drop{
  /* Wraps a select and draws its arrow box */
  position: relative;
  display: block;
  height: 27px;
  border: 1px solid #080808;
  border-radius: 6px;
  background: linear-gradient(#1d1d1d, #030303);
  box-shadow: 1px 1px 0 #444;
}

.drop select{
  appearance: none;
  width: 100%;
  height: 100%;
  border: 0;
  background: none;
  color: white;
  font: 14px "Open Sans", "Noto Sans", sans-serif;
  padding: 0 32px 0 6px;
  text-align: center;
  text-align-last: center;
}

.drop::before{
  content: "";
  position: absolute;
  right: 0;
  top: 0;
  bottom: 0;
  width: 30px;
  border-left: 1px solid #333;
  border-radius: 5px;
}

.drop::after{
  content: "";
  position: absolute;
  right: 10px;
  top: 10px;
  border: 5px solid transparent;
  border-top-color: #ccc;
  border-bottom: 0;
}

.time-drop{
  width: 98px;
  margin-right: 6px;
}

.trigger-drop{
  width: 174px;
}

.trigger-drop select{
  padding: 0 28px 0 2px;
}

.source-drop{
  width: 123px;
}

/* Bottom controls */
.controls{
  position: relative;
  height: 132px;
  flex: none;
  display: flex;
  justify-content: center;
  padding-right: 2px;
  border-radius: 6px 6px 0 0;
  background: linear-gradient(#4a4a4a, #333 45%);
}

.section-heads{
  display: flex;
  height: 27px;
  padding: 0 24px 0 18px;
}

.section-heads h2{
  padding-top: 9px;
}

.instruments-title{
  width: 162px;
}

.active-tab{
  position: relative;
  margin-left: auto;
  padding-top: 6px;
}

.active-tab span{
  position: absolute;
  left: 26px;
  top: 10px;
  font: bold 13px/16px "Liberation Sans", Arial, sans-serif;
  white-space: nowrap;
}

.outputs-box{
  width: 908px;
  height: 94px;
  display: flex;
  padding: 4px;
  border: 1px solid #555;
  border-radius: 6px;
  background: linear-gradient(#363636, #1c1c1c 45%);
}

.instruments{
  display: flex;
  width: 152px;
  height: 85px;
  margin-right: 21px;
  border: 2px solid #333;
  border-radius: 9px;
  background-color: #191919;
  overflow: hidden;
}

.instrument-list{
  flex: 1;
  padding: 2px;
}

.instrument{
  display: flex;
  gap: 4px;
  width: 127px;
  height: 37px;
  margin-bottom: 4px;
  padding: 1px 2px;
  border: 3px solid transparent;
  border-radius: 8px;
}

.connected{
  border-color: red;
}

.letter{
  width: 31px;
  height: 31px;
  margin-top: -1px;
  border: 2px solid #999;
  border-radius: 6px;
  background: linear-gradient(#d8d8d8, #999);
  color: #222;
  font-size: 19px;
  line-height: 26px;
}

.connected .letter{
  background: #00e4e4;
  border-color: #8cc;
  color: white;
}

.connect{
  width: 81px;
  height: 30px;
  border: 1px solid #080808;
  border-radius: 8px;
  background: linear-gradient(#363636, #202020);
  font-size: 13px;
}

.expand{
  width: 14px;
  padding-left: 3px;
  background: linear-gradient(#5c5c5c, #484848);
}

.output{
  display: flex;
  width: 188px;
  padding-top: 7px;
  flex: none;
}

.output:last-child{
  width: 150px;
}

.output-bar{
  width: 23px;
  height: 71px;
  display: flex;
  align-items: flex-end;
  justify-content: center;
  border-radius: 4px 0 0 4px;
  color: black;
  font: bold 22px/24px "Liberation Sans", Arial, sans-serif;
}

.yellow{
  background: linear-gradient(#e3b812, #b5890f);
}

.green{
  background: linear-gradient(#3c9a2a, #2f8020);
}

.blue{
  background: linear-gradient(#4470b2, #38558f);
}

.pink{
  background: linear-gradient(#c4307f, #a02868);
}

.module{
  margin: 27px 0 0 30px;
  line-height: 20px;
}

.ranges{
  margin: -3px 0 0 4px;
}

.range-row{
  display: flex;
  align-items: center;
  gap: 3px;
  margin-bottom: 2px;
}

.tag{
  width: 23px;
  height: 21px;
  border-radius: 4px;
  background-color: #d6d6d6;
  color: black;
  font: 14px "Liberation Sans", Arial, sans-serif;
  text-shadow: 0 0 1px black;
}

.tag.on{
  background-color: #ff0;
}

.drop.light{
  width: 95px;
  height: 25px;
  border: 2px solid #ccc;
  border-radius: 4px;
  background: linear-gradient(#484848, #303030);
  box-shadow: none;
}

.light select{
  padding: 2px 20px 0 0;
}

.light::before{
  width: 24px;
  border: 1px solid #ccc;
  border-width: 0 0 0 1px;
  border-radius: 3px;
}

.light::after{
  right: 7px;
  top: 7px;
  border-width: 6px 4px 0;
  border-top-color: #bbb;
}

.formula-title{
  margin: 7px 0 9px 5px;
}

.formula-box{
  height: 87px;
  width: 157px;
  margin: 0 7px 0 5px;
  padding: 3px 4px;
  border: 1px solid #1c1c1c;
  border-radius: 8px;
  background: linear-gradient(#2c2c2c, #1e1e1e);
}

.down{
  border: 5px solid transparent;
  border-top: 9px solid #777;
  border-bottom: 0;
  margin: 0 2px;
}

.run-title{
  margin: 11px 0 6px -1px;
}

.run-box{
  display: flex;
  gap: 33px;
  width: 171px;
  height: 86px;
  padding: 6px 18px;
  border: 1px solid #4a4a4a;
  border-radius: 6px;
  background-color: #333;
}

.run{
  width: 50px;
  font: bold 12px/16px "Liberation Sans", Arial, sans-serif;
  white-space: nowrap;
}

.run span{
  display: flex;
  justify-content: center;
  height: 20px;
}

.version{
  position: absolute;
  right: 5px;
  bottom: 2px;
  font-size: 12px;
  color: #999;
}
```
